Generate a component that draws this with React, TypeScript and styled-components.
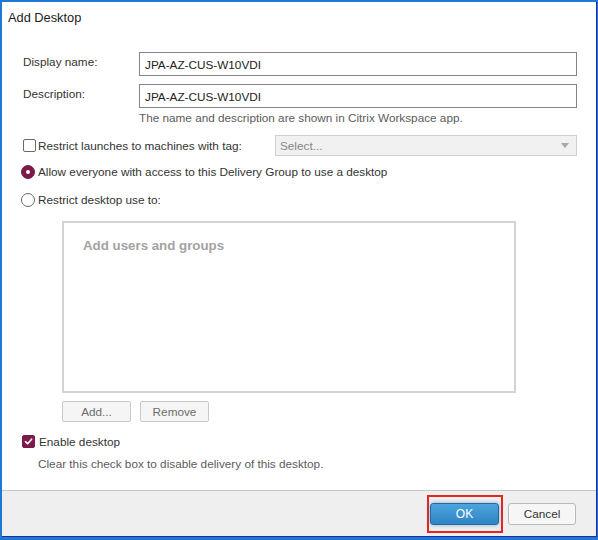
import React from "react";
import styled, { createGlobalStyle } from "styled-components";

const Global = createGlobalStyle`
  html, body { margin: 0; padding: 0; background: #ffffff; }
  body { font-family: "Liberation Sans", Arial, sans-serif; font-size: 11.75px; color: #2b2b2b; }
  * { box-sizing: border-box; }
`;

const MAROON = "#7c1a4b";

const Frame = styled.div`
  width: 598px;
  height: 540px;
  background: #2277d3;
  padding: 2px 1px 3px 2px;
  display: flex;
`;

const Dialog = styled.div`
  flex: 1;
  display: flex;
  flex-direction: column;
  background: #ffffff;
  border-right: 1px solid #1b2ea6;
  border-bottom: 1px solid #1b2ea6;
`;

const Title = styled.div`
  padding: 8px 0 0 6px;
  font-size: 12.8px;
  line-height: 16px;
  color: #222;
`;

const Body = styled.div`
  flex: 1;
  padding: 26px 19px 0 21px;
  display: flex;
  flex-direction: column;
`;

const FieldRow = styled.div<{ $mt?: number }>`
  display: grid;
  grid-template-columns: 116px 1fr;
  align-items: start;
  margin-top: ${(p) => p.$mt ?? 0}px;
`;

const Label = styled.div`
  margin-top: 2px;
  line-height: 15px;
  color: #333;
`;

const TextInput = styled.div`
  height: 24px;
  border: 1px solid #858585;
  padding: 0 5px;
  display: flex;
  align-items: center;
  color: #222;
`;

const Hint = styled.div<{ $indent: number; $mt: number }>`
  margin-top: ${(p) => p.$mt}px;
  padding-left: ${(p) => p.$indent}px;
  line-height: 15px;
  color: #5c5c5c;
`;

const OptionRow = styled.div<{ $mt: number; $ml?: number }>`
  display: flex;
  align-items: center;
  min-height: 15px;
  margin-top: ${(p) => p.$mt}px;
  margin-left: ${(p) => p.$ml ?? 0}px;
  line-height: 15px;
  color: #333;
`;

const OptionText = styled.span<{ $gap: number }>`
  margin-left: ${(p) => p.$gap}px;
  flex: 1;
`;

const Box = styled.span<{ $checked?: boolean }>`
  width: 13px;
  height: 13px;
  border-radius: 2px;
  border: 1px solid ${(p) => (p.$checked ? MAROON : "#6a6a6a")};
  background: ${(p) => (p.$checked ? MAROON : "#fff")};
  display: inline-flex;
  align-items: center;
  justify-content: center;
  flex: none;
`;

const Radio = styled.span<{ $checked?: boolean }>`
  width: 14px;
  height: 14px;
  border-radius: 50%;
  border: 1px solid ${(p) => (p.$checked ? MAROON : "#6a6a6a")};
  background: ${(p) => (p.$checked ? MAROON : "#fff")};
  display: inline-flex;
  align-items: center;
  justify-content: center;
  flex: none;
  &::after {
    content: "";
    width: 4px;
    height: 4px;
    border-radius: 50%;
    background: #fff;
    display: ${(p) => (p.$checked ? "block" : "none")};
  }
`;

const Select = styled.div`
  width: 302px;
  height: 21px;
  border: 1px solid #cfcfcf;
  background: #f1f1f1;
  display: flex;
  align-items: center;
  justify-content: space-between;
  padding: 0 7px 0 4px;
  color: #858585;
`;

const Caret = styled.span`
  width: 0;
  height: 0;
  border-left: 4px solid transparent;
  border-right: 4px solid transparent;
  border-top: 5px solid #a8a8a8;
`;

const UsersBox = styled.div`
  margin-top: 14px;
  margin-left: 39px;
  width: 454px;
  height: 172px;
  border: 2px solid #d3d3d3;
  padding: 15px 0 0 19px;
  font-weight: bold;
  font-size: 13.3px;
  line-height: 16px;
  color: #a3a3a3;
`;

const ButtonRow = styled.div`
  display: flex;
  gap: 9px;
  margin-top: 8px;
  margin-left: 39px;
`;

const SmallButton = styled.div`
  width: 69px;
  height: 21px;
  border: 1px solid #c9c9c9;
  border-radius: 2px;
  background: #f5f5f5;
  color: #6c6c6c;
  display: flex;
  align-items: center;
  justify-content: center;
`;

const Footer = styled.div`
  height: 46px;
  border-top: 1px solid #c6c6c6;
  background: #efefef;
  display: flex;
  align-items: center;
  justify-content: flex-end;
  padding-right: 20px;
  gap: 5px;
`;

const Highlight = styled.div`
  border: 2px solid #e5261d;
  padding: 6px 2px 6px 1px;
  display: flex;
`;

const PrimaryButton = styled.div`
  width: 69px;
  height: 22px;
  border-radius: 3px;
  border: 1px solid #23679e;
  background: linear-gradient(#4ba5dc, #2f84c4);
  box-shadow: 0 0 4px rgba(60, 120, 170, 0.55);
  color: #fff;
  font-size: 12px;
  display: flex;
  align-items: center;
  justify-content: center;
`;

const SecondaryButton = styled.div`
  width: 68px;
  height: 22px;
  border-radius: 3px;
  border: 1px solid #b9b9b9;
  background: #f6f6f6;
  color: #333;
  display: flex;
  align-items: center;
  justify-content: center;
`;

const Check = () => (
  <svg width="9" height="9" viewBox="0 0 9 9">
    <path d="M1.5 4.6 L3.6 6.7 L7.6 2.2" fill="none" stroke="#fff" strokeWidth="1.7" strokeLinecap="round" strokeLinejoin="round" />
  </svg>
);

export default function App() {
  return (
    <>
      <Global />
      <Frame>
        <Dialog>
          <Title>Add Desktop</Title>
          <Body>
            <FieldRow>
              <Label>Display name:</Label>
              <TextInput>JPA-AZ-CUS-W10VDI</TextInput>
            </FieldRow>
            <FieldRow $mt={8}>
              <Label>Description:</Label>
              <TextInput>JPA-AZ-CUS-W10VDI</TextInput>
            </FieldRow>
            <Hint $indent={116} $mt={2}>
              The name and description are shown in Citrix Workspace app.
            </Hint>
            <OptionRow $mt={10}>
              <Box />
              <OptionText $gap={2}>Restrict launches to machines with tag:</OptionText>
              <Select>
                <span>Select...</span>
                <Caret />
              </Select>
            </OptionRow>
            <OptionRow $mt={8} $ml={-2}>
              <Radio $checked />
              <OptionText $gap={3}>Allow everyone with access to this Delivery Group to use a desktop</OptionText>
            </OptionRow>
            <OptionRow $mt={13} $ml={-2}>
              <Radio />
              <OptionText $gap={3}>Restrict desktop use to:</OptionText>
            </OptionRow>
            <UsersBox>Add users and groups</UsersBox>
            <ButtonRow>
              <SmallButton>Add...</SmallButton>
              <SmallButton>Remove</SmallButton>
            </ButtonRow>
            <OptionRow $mt={12} $ml={-1}>
              <Box $checked>
                <Check />
              </Box>
              <OptionText $gap={4}>Enable desktop</OptionText>
            </OptionRow>
            <Hint $indent={15} $mt={7}>
              Clear this check box to disable delivery of this desktop.
            </Hint>
          </Body>
          <Footer>
            <Highlight>
              <PrimaryButton>OK</PrimaryButton>
            </Highlight>
            <SecondaryButton>Cancel</SecondaryButton>
          </Footer>
        </Dialog>
      </Frame>
    </>
  );
}
